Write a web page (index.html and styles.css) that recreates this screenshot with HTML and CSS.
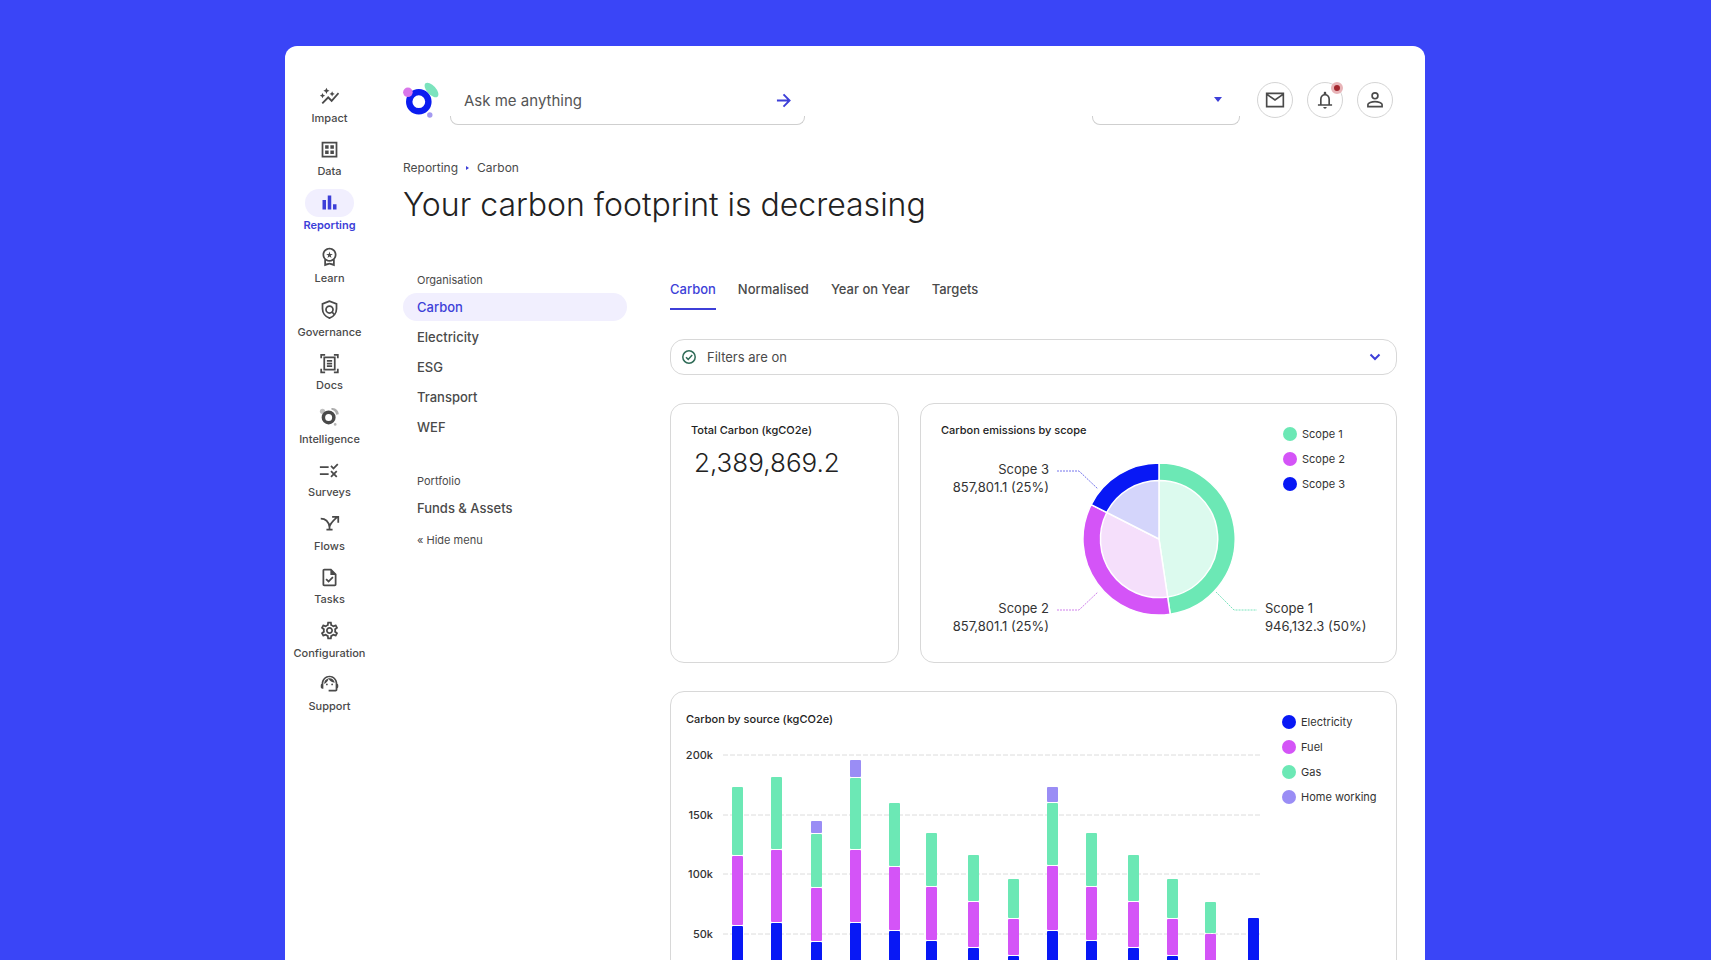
FILE: index.html
```
<!DOCTYPE html>
<html lang="en">
<head>
  <meta charset="UTF-8" />
  <meta name="viewport" content="width=device-width, initial-scale=1.0" />
  <title>Carbon reporting</title>
  <link rel="stylesheet" href="styles.css">
</head>
<body>

  <div class="panel">

    <!-- Sidebar -->
    <nav class="sidebar">
      <a href="#" class="side-item">
        <span class="side-icon"><svg viewBox="0 0 24 24"><path d="M14.06 9.94L12 9l2.06-.94L15 6l.94 2.06L18 9l-2.06.94L15 12l-.94-2.06zM4 14l.94-2.06L7 11l-2.06-.94L4 8l-.94 2.06L1 11l2.06.94L4 14zm4.5-5l1.09-2.41L12 5.5 9.59 4.41 8.5 2 7.41 4.41 5 5.5l2.41 1.09L8.5 9zm-4 11.5l6-6.01 4 4L23 8.93l-1.41-1.41-7.09 7.97-4-4L3 19l1.5 1.5z"/></svg></span>
        <span>Impact</span>
      </a>
      <a href="#" class="side-item">
        <span class="side-icon"><svg viewBox="0 0 24 24"><path class="line" d="M4 4h16v16H4z"/><path d="M7 7h4v4H7zM13 7h4v4h-4zM7 13h4v4H7zM13 13h4v4h-4z"/></svg></span>
        <span>Data</span>
      </a>
      <a href="#" class="side-item active">
        <span class="side-icon"><svg viewBox="0 0 24 24"><path d="M4 9h4v11H4zM16 14h4v6h-4zM10 4h4v16h-4z"/></svg></span>
        <span>Reporting</span>
      </a>
      <a href="#" class="side-item">
        <span class="side-icon"><svg viewBox="0 0 24 24"><path d="M9.68 13.69L12 11.93l2.31 1.76-.88-2.85L15.75 9h-2.84L12 6.19 11.09 9H8.25l2.31 1.84-.88 2.85zM20 10c0-4.42-3.58-8-8-8s-8 3.58-8 8c0 2.03.76 3.87 2 5.28V23l6-2 6 2v-7.72c1.24-1.41 2-3.25 2-5.28zm-8-6c3.31 0 6 2.69 6 6s-2.69 6-6 6-6-2.69-6-6 2.69-6 6-6zm0 15l-4 1.02v-3.1c1.18.68 2.54 1.08 4 1.08s2.82-.4 4-1.08v3.1L12 19z"/></svg></span>
        <span>Learn</span>
      </a>
      <a href="#" class="side-item">
        <span class="side-icon"><svg viewBox="0 0 24 24"><path class="line" d="M12 2.5L4 5.6v5.6c0 4.9 3.3 9.2 8 10.6 4.700-1.400 8-5.700 8-10.600V5.600z"/><circle class="line" cx="12" cy="12" r="4"/><path class="line" d="M14.600 14.600l3 3.200"/></svg></span>
        <span>Governance</span>
      </a>
      <a href="#" class="side-item">
        <span class="side-icon"><svg viewBox="0 0 24 24"><path class="line" d="M7 2H2.500v4M17 2h4.500v4M7 22H2.500v-4M17 22h4.500v-4M6 5h12v14H6zM9 9h6M9 12h6M9 15h6"/></svg></span>
        <span>Docs</span>
      </a>
      <a href="#" class="side-item">
        <span class="side-icon"><svg viewBox="0 0 24 24"><circle cx="4" cy="6" r="3" opacity=".35"/><path d="M14 2.500c4-1.500 9 3 8.500 7l-3 .5c0-3-2.500-5.500-5-5.500z" opacity=".45"/><circle cx="18.500" cy="21" r="1.500" opacity=".4"/><circle class="ring" cx="11" cy="13" r="6"/></svg></span>
        <span>Intelligence</span>
      </a>
      <a href="#" class="side-item">
        <span class="side-icon"><svg viewBox="0 0 24 24"><path d="M16.540 11L13 7.460l1.410-1.410 2.120 2.120 4.240-4.240 1.410 1.410L16.540 11zM11 7H1v2h10V7zm10 6.410L19.590 12 17 14.590 14.410 12 13 13.410 15.590 16 13 18.590 14.410 20 17 17.410 19.590 20 21 18.590 18.410 16 21 13.410zM11 15H1v2h10v-2z"/></svg></span>
        <span>Surveys</span>
      </a>
      <a href="#" class="side-item">
        <span class="side-icon"><svg viewBox="0 0 24 24"><path class="line" d="M2 6.500c5 0 9 3.500 10 9.500M12 16c.5-4 3-6 9-11.500M15 4.500h7V11M12 12v7.500M8.500 19h7"/></svg></span>
        <span>Flows</span>
      </a>
      <a href="#" class="side-item">
        <span class="side-icon"><svg viewBox="0 0 24 24"><path d="M14 2H6c-1.100 0-1.990.9-1.990 2L4 20c0 1.100.89 2 1.990 2H18c1.100 0 2-.9 2-2V8l-6-6zm4 18H6V4h7v5h5v11zm-9.180-6.950L7.400 14.460 10.940 18l5.660-5.660-1.410-1.410-4.240 4.240-2.130-2.120z"/></svg></span>
        <span>Tasks</span>
      </a>
      <a href="#" class="side-item">
        <span class="side-icon"><svg viewBox="0 0 24 24"><path d="M19.430 12.980c.04-.32.07-.64.07-.98 0-.34-.03-.66-.07-.98l2.110-1.650c.19-.15.24-.42.12-.64l-2-3.460c-.09-.16-.26-.25-.44-.25-.06 0-.12.01-.17.03l-2.490 1c-.52-.4-1.080-.73-1.690-.98l-.38-2.650C14.460 2.180 14.250 2 14 2h-4c-.25 0-.46.18-.49.42l-.38 2.650c-.61.25-1.170.59-1.690.98l-2.490-1c-.06-.02-.12-.03-.18-.03-.17 0-.34.09-.43.25l-2 3.460c-.13.22-.07.49.12.64l2.110 1.650c-.04.32-.07.65-.07.98 0 .33.03.66.07.98l-2.110 1.650c-.19.15-.24.42-.12.64l2 3.460c.09.16.26.25.44.25.06 0 .12-.01.17-.03l2.490-1c.52.4 1.080.73 1.690.98l.38 2.650c.03.24.24.42.49.42h4c.25 0 .46-.18.49-.42l.38-2.650c.61-.25 1.170-.59 1.690-.98l2.490 1c.06.02.12.03.18.03.17 0 .34-.09.43-.25l2-3.460c.12-.22.07-.49-.12-.64l-2.110-1.650zm-1.980-1.710c.04.31.05.52.05.73 0 .21-.02.43-.05.73l-.14 1.130.89.7 1.080.84-.7 1.210-1.270-.51-1.040-.42-.9.68c-.43.32-.84.56-1.250.73l-1.060.43-.16 1.130-.2 1.350h-1.400l-.19-1.350-.16-1.130-1.060-.43c-.43-.18-.83-.41-1.230-.71l-.91-.7-1.060.43-1.270.51-.7-1.210 1.080-.84.89-.7-.14-1.130c-.03-.31-.05-.54-.05-.74s.02-.43.05-.73l.14-1.130-.89-.7-1.080-.84.7-1.210 1.270.51 1.040.42.9-.68c.43-.32.84-.56 1.250-.73l1.060-.43.16-1.130.2-1.350h1.390l.19 1.350.16 1.130 1.060.43c.43.18.83.41 1.230.71l.91.7 1.060-.43 1.270-.51.7 1.210-1.070.85-.89.7.14 1.130zM12 8c-2.210 0-4 1.790-4 4s1.790 4 4 4 4-1.790 4-4-1.790-4-4-4zm0 6c-1.100 0-2-.9-2-2s.9-2 2-2 2 .9 2 2-.9 2-2 2z"/></svg></span>
        <span>Configuration</span>
      </a>
      <a href="#" class="side-item">
        <span class="side-icon"><svg viewBox="0 0 24 24"><path d="M21 12.220C21 6.730 16.740 3 12 3c-4.690 0-9 3.650-9 9.280-.6.34-1 .98-1 1.720v2c0 1.100.9 2 2 2h1v-6.100c0-3.870 3.130-7 7-7s7 3.130 7 7V19h-8v2h8c1.100 0 2-.9 2-2v-1.220c.59-.31 1-.92 1-1.640v-2.300c0-.7-.41-1.310-1-1.620z"/><circle cx="9" cy="13" r="1"/><circle cx="15" cy="13" r="1"/><path d="M18 11.030C17.520 8.180 15.040 6 12.050 6c-3.030 0-6.290 2.510-6.030 6.450 2.470-1.010 4.330-3.210 4.860-5.890 1.310 2.630 4 4.440 7.120 4.470z"/></svg></span>
        <span>Support</span>
      </a>
    </nav>

    <main class="main">

      <!-- Top bar -->
      <header class="topbar">
        <svg class="logo" viewBox="0 0 36 37">
          <ellipse cx="28.500" cy="8" rx="9" ry="4.500" transform="rotate(48 28.500 8)" fill="#7be3bd"/>
          <circle cx="15.800" cy="19.700" r="9.600" fill="none" stroke="#0b1cf0" stroke-width="6.400"/>
          <circle cx="4.900" cy="10.300" r="4.800" fill="#d977ea"/>
          <circle cx="26.800" cy="33" r="2.700" fill="#a49af0"/>
        </svg>
        <form class="search">
          <input type="text" placeholder="Ask me anything" aria-label="Ask me anything">
          <button type="button" aria-label="Send">
            <svg viewBox="0 0 16 16"><path d="M1 8h13M8 1.500L14.500 8 8 14.500"/></svg>
          </button>
        </form>
        <div class="picker">
          <select aria-label="Account"><option></option></select>
          <svg viewBox="0 0 8 5"><path d="M0 0h8L4 5z"/></svg>
        </div>
        <div class="actions">
          <button type="button" class="round" aria-label="Messages">
            <svg viewBox="0 0 24 24"><path class="line" d="M2 4h20v16H2zM2 5l10 7 10-7"/></svg>
          </button>
          <button type="button" class="round" aria-label="Notifications">
            <svg viewBox="0 0 24 24"><path d="M12 22.500c1.100 0 2-.9 2-2h-4c0 1.100.9 2 2 2zm6-6v-5.500c0-3.070-1.630-5.640-4.500-6.320V3.500c0-.83-.67-1.500-1.500-1.500s-1.500.67-1.500 1.500v1.180C7.640 5.360 6 7.920 6 11v6H3.500v2h17v-2H18zm-2 .5H8v-6c0-2.480 1.510-4.500 4-4.500s4 2.020 4 4.500v6z"/></svg>
            <span class="badge"></span>
          </button>
          <button type="button" class="round" aria-label="Profile">
            <svg viewBox="0 0 24 24"><circle class="line" cx="12" cy="7" r="3.500"/><path class="line" d="M3.500 20v-2.500c0-2 4.500-3.500 8.500-3.500s8.500 1.500 8.500 3.500V20z"/></svg>
          </button>
        </div>
      </header>

      <div class="breadcrumb">
        <a href="#">Reporting</a>
        <svg viewBox="0 0 3 4"><path d="M0 0l3 2-3 2z"/></svg>
        <a href="#">Carbon</a>
      </div>
      <h1>Your carbon footprint is decreasing</h1>

      <div class="content">

        <!-- Report menu -->
        <nav class="menu">
          <div class="menu-title">Organisation</div>
          <a href="#" class="menu-item active">Carbon</a>
          <a href="#" class="menu-item">Electricity</a>
          <a href="#" class="menu-item">ESG</a>
          <a href="#" class="menu-item">Transport</a>
          <a href="#" class="menu-item">WEF</a>
          <div class="menu-title second">Portfolio</div>
          <a href="#" class="menu-item">Funds &amp; Assets</a>
          <button type="button" class="hide-menu">« Hide menu</button>
        </nav>

        <section class="report">
          <nav class="tabs">
            <a href="#" class="active">Carbon</a>
            <a href="#">Normalised</a>
            <a href="#">Year on Year</a>
            <a href="#">Targets</a>
          </nav>

          <button type="button" class="filters">
            <svg class="check" viewBox="0 0 14 14"><circle cx="7" cy="7" r="6.200"/><path d="M4 7.200l2.200 2.200L10.200 5"/></svg>
            <span>Filters are on</span>
            <svg class="chevron" viewBox="0 0 12 8"><path d="M1.500 1.500L6 6l4.500-4.500"/></svg>
          </button>

          <div class="cards">
            <div class="card total">
              <h2>Total Carbon (kgCO2e)</h2>
              <div class="value">2,389,869.2</div>
            </div>

            <div class="card scope">
              <div class="card-head">
                <h2>Carbon emissions by scope</h2>
                <ul class="legend">
                  <li class="green">Scope 1</li>
                  <li class="purple">Scope 2</li>
                  <li class="blue">Scope 3</li>
                </ul>
              </div>
              <svg class="pie" viewBox="0 0 475 258">
                <!-- outer ring -->
                <g stroke="#fff" stroke-width="1.500">
                  <path fill="#6ce8b5" d="M238 135V59A76 76 0 0 1 249.200 210.200z"/>
                  <path fill="#d454f7" d="M238 135L249.200 210.200A76 76 0 0 1 170.200 100.600z"/>
                  <path fill="#0818f5" d="M238 135L170.200 100.600A76 76 0 0 1 238 59z"/>
                </g>
                <!-- inner slices -->
                <g stroke="#fff" stroke-width="1.500">
                  <path fill="#dcfaee" d="M238 135V76.500A58.500 58.500 0 0 1 246.600 192.900z"/>
                  <path fill="#f5dffb" d="M238 135L246.600 192.900A58.500 58.500 0 0 1 185.800 108.500z"/>
                  <path fill="#d4d5fb" d="M238 135L185.800 108.500A58.500 58.500 0 0 1 238 76.500z"/>
                </g>
                <g class="leader">
                  <path stroke="#7474ec" d="M136 67h22l19 18"/>
                  <path stroke="#d080ec" d="M136 206h22l19-18"/>
                  <path stroke="#7be3bd" d="M295 188l18 18h23"/>
                </g>
                <g class="pie-text end">
                  <text x="128" y="70">Scope 3</text>
                  <text x="128" y="88">857,801.1 (25%)</text>
                  <text x="128" y="209">Scope 2</text>
                  <text x="128" y="227">857,801.1 (25%)</text>
                </g>
                <g class="pie-text">
                  <text x="344" y="209">Scope 1</text>
                  <text x="344" y="227">946,132.3 (50%)</text>
                </g>
              </svg>
            </div>

            <div class="card source">
              <div class="source-chart">
                <h2>Carbon by source (kgCO2e)</h2>
                <svg class="bars" viewBox="0 0 576 260">
                  <g class="grid">
                    <path d="M37 15h539M37 75h539M37 134h539M37 194h539M37 254h539"/>
                  </g>
                  <g class="axis">
                    <text x="27" y="19">200k</text>
                    <text x="27" y="79">150k</text>
                    <text x="27" y="138">100k</text>
                    <text x="27" y="198">50k</text>
                  </g>
                  <g id="bars"></g>
                </svg>
              </div>
              <ul class="legend">
                <li class="blue">Electricity</li>
                <li class="purple">Fuel</li>
                <li class="green">Gas</li>
                <li class="lilac">Home working</li>
              </ul>
            </div>
          </div>
        </section>
      </div>
    </main>
  </div>

  <script src="chart.js"></script>
</body>
</html>
```

FILE: styles.css
```
* {
  box-sizing: border-box;
}

body {
  margin: 0;
  padding: 46px 286px 0 285px;
  height: 100vh;
  overflow: hidden;
  background: #3a45f7;
  font-family: Inter, 'Liberation Sans', sans-serif;
  color: #4a4a4a;
}

a {
  color: inherit;
  text-decoration: none;
}

button {
  font-family: inherit;
  color: inherit;
  background: none;
  border: none;
  padding: 0;
  cursor: pointer;
}

svg {
  display: block;
  flex-shrink: 0;
}

.line {
  fill: none;
  stroke: currentColor;
  stroke-width: 2;
}

.panel {
  display: flex;
  min-height: 100vh;
  background: #fff;
  border-radius: 12px 12px 0 0;
}

/* Sidebar */
.sidebar {
  width: 89px;
  min-height: 668px;
  align-self: flex-start;
  padding-top: 36px;
  display: flex;
  flex-direction: column;
  justify-content: space-between;
}

.side-item {
  display: flex;
  flex-direction: column;
  align-items: center;
  font-size: 11px;
  line-height: 16px;
  font-weight: 500;
}

.side-icon {
  width: 49px;
  height: 28px;
  border-radius: 14px;
  display: flex;
  align-items: center;
  justify-content: center;
}

.side-icon svg {
  width: 21px;
  height: 21px;
  fill: currentColor;
}

.side-icon .line {
  fill: none;
}

.side-icon .ring {
  fill: none;
  stroke: currentColor;
  stroke-width: 4;
}

.side-item.active {
  color: #3d3fd8;
  font-weight: 600;
}

.side-item.active .side-icon {
  background: #f1effe;
}

/* Main */
.main {
  flex: 1;
  min-width: 0;
  padding: 32px 28px 0 29px;
}

.topbar {
  display: flex;
  align-items: center;
  padding-right: 4px;
}

.logo {
  width: 36px;
  height: 37px;
  margin-bottom: 3px;
}

.search,
.picker {
  position: relative;
  height: 47px;
}

/* only the bottom edge of the field is outlined */
.search::after,
.picker::after {
  content: '';
  position: absolute;
  left: 0;
  right: 0;
  bottom: 0;
  height: 8px;
  border: 1px solid #cfcfcf;
  border-top: none;
  border-radius: 0 0 8px 8px;
  pointer-events: none;
}

.search {
  display: flex;
  align-items: center;
  width: 355px;
  margin-left: 11px;
  margin-right: auto;
  padding: 0 14px 2px;
}

.search input {
  flex: 1;
  min-width: 0;
  border: none;
  outline: none;
  padding: 0;
  background: none;
  font-family: inherit;
  font-size: 15px;
}

.search input::placeholder {
  color: #555;
  opacity: 1;
}

.search svg {
  width: 15px;
  height: 15px;
  fill: none;
  stroke: #3d3fd8;
  stroke-width: 2;
}

.picker {
  width: 148px;
  margin-right: 17px;
}

.picker select {
  width: 100%;
  height: 100%;
  appearance: none;
  background: none;
  border: none;
}

.picker svg {
  position: absolute;
  right: 18px;
  top: 19px;
  width: 8px;
  height: 5px;
  fill: #3d3fd8;
}

.actions {
  display: flex;
  gap: 14px;
  margin-bottom: 3px;
}

.round {
  position: relative;
  width: 36px;
  height: 36px;
  border: 1px solid #d4d4d4;
  border-radius: 50%;
  display: flex;
  align-items: center;
  justify-content: center;
}

.round svg {
  width: 20px;
  height: 20px;
  fill: currentColor;
}

.badge {
  position: absolute;
  top: -1px;
  right: -1px;
  width: 12px;
  height: 12px;
  border: 3px solid #e8b4b8;
  border-radius: 50%;
  background: #a3262e;
}

.breadcrumb {
  display: flex;
  align-items: center;
  gap: 8px;
  margin-top: 35px;
  font-size: 12px;
  line-height: 16px;
}

.breadcrumb svg {
  width: 3px;
  height: 4px;
  fill: #3d3fd8;
}

h1 {
  margin: 7px 0 45px;
  font-size: 32px;
  line-height: 44px;
  font-weight: 300;
  color: #222;
}

.content {
  display: flex;
  gap: 43px;
}

/* Report menu */
.menu {
  width: 224px;
  display: flex;
  flex-direction: column;
  align-items: stretch;
  gap: 2px;
}

.menu-title {
  padding-left: 14px;
  margin-bottom: 3px;
  font-size: 11px;
  line-height: 16px;
}

.menu-title.second {
  margin-top: 30px;
}

.menu-item {
  padding: 0 14px;
  border-radius: 14px;
  font-size: 13px;
  line-height: 28px;
  font-weight: 500;
}

.menu-item.active {
  background: #f1effe;
  color: #3d3fd8;
}

.hide-menu {
  align-self: flex-start;
  margin-top: 8px;
  padding-left: 14px;
  font-size: 11px;
  line-height: 16px;
}

/* Report */
.report {
  flex: 1;
  min-width: 0;
}

.tabs {
  display: flex;
  gap: 22px;
  padding-top: 7px;
  font-size: 13px;
  line-height: 20px;
  font-weight: 500;
}

.tabs a {
  padding-bottom: 9px;
  border-bottom: 2px solid transparent;
}

.tabs .active {
  color: #3d3fd8;
  border-color: #3d3fd8;
}

.filters {
  width: 100%;
  height: 36px;
  margin: 29px 0 28px;
  padding: 0 15px 0 11px;
  display: flex;
  align-items: center;
  gap: 11px;
  border: 1px solid #d8d8d8;
  border-radius: 14px;
  font-size: 13px;
}

.check {
  width: 14px;
  height: 14px;
  fill: none;
  stroke: #2f6b57;
  stroke-width: 1.5;
}

.chevron {
  width: 12px;
  height: 8px;
  margin-left: auto;
  fill: none;
  stroke: #3d3fd8;
  stroke-width: 2;
}

.cards {
  display: grid;
  grid-template-columns: 229px 1fr;
  gap: 28px 21px;
}

.card {
  border: 1px solid #d8d8d8;
  border-radius: 14px;
}

.card h2 {
  margin: 0;
  font-size: 11px;
  line-height: 16px;
  font-weight: 500;
  color: #222;
}

.total {
  padding: 18px 20px;
}

.value {
  padding-left: 3px;
  margin-top: 7px;
  font-size: 26px;
  line-height: 36px;
  font-weight: 300;
  color: #222;
}

/* the pie lies under the heading row and legend */
.scope {
  display: grid;
}

.card-head,
.pie {
  grid-area: 1 / 1;
}

.card-head {
  display: flex;
  justify-content: space-between;
  align-items: flex-start;
  padding: 18px 20px;
}

.card-head .legend {
  margin-top: 4px;
}

.pie {
  width: 100%;
}

.leader {
  fill: none;
  stroke-dasharray: 2 1;
}

.pie-text {
  font-size: 13px;
  fill: #333;
}

.end {
  text-anchor: end;
}

.legend {
  width: 93px;
  margin: 0;
  padding: 0;
  list-style: none;
  display: flex;
  flex-direction: column;
  gap: 9px;
  font-size: 11px;
  line-height: 16px;
  color: #333;
}

.legend li {
  display: flex;
  align-items: center;
  gap: 5px;
  white-space: nowrap;
}

.legend li::before {
  content: '';
  width: 14px;
  height: 14px;
  border-radius: 50%;
  background: currentColor;
}

.legend .blue::before {
  background: #0818f5;
}

.legend .purple::before {
  background: #d454f7;
}

.legend .green::before {
  background: #6ce8b5;
}

.legend .lilac::before {
  background: #9a8df5;
}

.source {
  grid-column: 1 / -1;
  display: flex;
  gap: 20px;
  padding: 19px 15px;
}

.source .legend {
  margin-top: 3px;
  width: 99px;
}

.source-chart {
  flex: 1;
  min-width: 0;
}

.bars {
  width: 100%;
  margin-top: 13px;
}

.grid {
  fill: none;
  stroke: #dcdcdc;
  stroke-dasharray: 5 2;
}

.axis {
  font-size: 11px;
  font-weight: 500;
  fill: #333;
  text-anchor: end;
}
```

FILE: chart.js
```
// x, then the top of each segment: home working, gas, fuel, electricity
const bars = [
  [46, null, 47, 116, 186],
  [85, null, 37, 110, 183],
  [125, 81, 94, 148, 202],
  [164, 20, 38, 110, 183],
  [203, null, 63, 127, 191],
  [240, null, 93, 147, 201],
  [282, null, 115, 162, 208],
  [322, null, 139, 179, 216],
  [361, 47, 63, 126, 191],
  [400, null, 93, 147, 201],
  [442, null, 115, 162, 208],
  [481, null, 139, 179, 216],
  [519, null, 162, 194, 225],
  [562, null, null, null, 178]
];
const colors = ['#9a8df5', '#6ce8b5', '#d454f7', '#0818f5'];
const group = document.getElementById('bars');

bars.forEach(([x, ...tops]) => {
  tops.forEach((top, i) => {
    if (top === null) return;
    const next = i < 3 ? tops[i + 1] - 1 : 254;
    const rect = document.createElementNS('http://www.w3.org/2000/svg', 'rect');
    rect.setAttribute('x', x);
    rect.setAttribute('y', top);
    rect.setAttribute('width', 11);
    rect.setAttribute('height', next - top);
    rect.setAttribute('rx', 1);
    rect.setAttribute('fill', colors[i]);
    group.appendChild(rect);
  });
});
```
